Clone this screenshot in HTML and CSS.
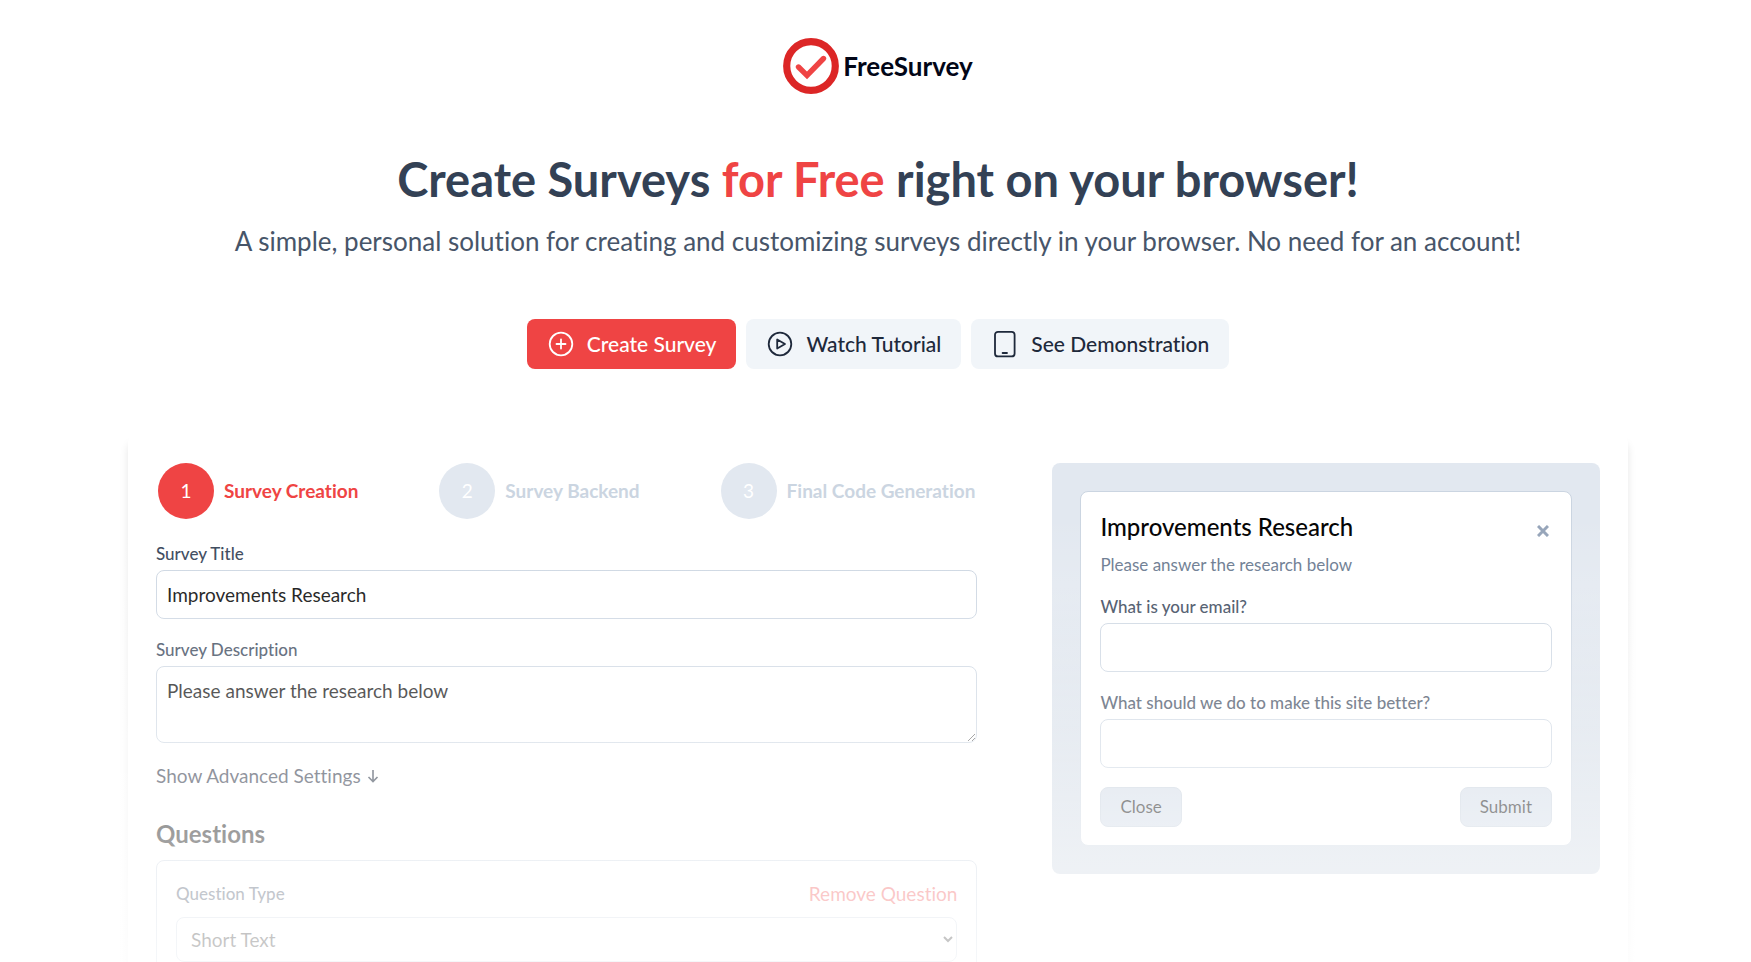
FILE: index.html
```html
<!DOCTYPE html>
<html lang="en">
  <head>
    <meta charset="utf-8">
    <meta name="viewport" content="width=device-width, initial-scale=1">
    <title>FreeSurvey</title>
    <link rel="stylesheet" href="styles.css">
  </head>
  <body>
    <div class="page">
      <header class="header">
        <a class="logo" href="#">
          <svg width="56" height="56" viewBox="0 0 56 56" fill="none">
            <circle cx="28" cy="28" r="24.3" stroke="#dc2626" stroke-width="7.2"/>
            <path d="M15.5 29L24 37.5L40.5 20.5" stroke="#ef4444" stroke-width="5.4" stroke-linecap="round"/>
          </svg>
          <span>FreeSurvey</span>
        </a>
      </header>

      <section class="hero">
        <h1>Create Surveys <span class="red">for Free</span> right on your browser!</h1>
        <p>A simple, personal solution for creating and customizing surveys directly in your browser. No need for an account!</p>
        <div class="actions">
          <a class="btn btn-primary" href="#create">
            <svg width="28" height="28" viewBox="0 0 28 28" fill="none" stroke="currentColor" stroke-width="1.8" stroke-linecap="round">
              <circle cx="14" cy="14" r="11.3"/>
              <path d="M14 9.5V18.5M9.5 14H18.5"/>
            </svg>
            Create Survey
          </a>
          <a class="btn" href="#tutorial">
            <svg width="28" height="28" viewBox="0 0 28 28" fill="none" stroke="currentColor" stroke-width="1.8" stroke-linejoin="round">
              <circle cx="14" cy="14" r="11.3"/>
              <path d="M11.2 9.5V18.5L19 14Z"/>
            </svg>
            Watch Tutorial
          </a>
          <a class="btn" href="#demo">
            <svg width="28" height="28" viewBox="0 0 28 28" fill="none" stroke="currentColor" stroke-width="1.8" stroke-linecap="round">
              <rect x="4" y="1.8" width="19.6" height="24.6" rx="3"/>
              <path d="M11.6 23H16"/>
            </svg>
            See Demonstration
          </a>
        </div>
      </section>

      <main class="card" id="create">
        <div class="builder">
          <ol class="steps">
            <li class="step active"><span class="num">1</span>Survey Creation</li>
            <li class="step"><span class="num">2</span>Survey Backend</li>
            <li class="step"><span class="num">3</span>Final Code Generation</li>
          </ol>

          <div class="field">
            <label for="title">Survey Title</label>
            <input id="title" type="text" value="Improvements Research">
          </div>
          <div class="field">
            <label for="description">Survey Description</label>
            <textarea id="description">Please answer the research below</textarea>
          </div>
          <button class="link-btn advanced" type="button">Show Advanced Settings
            <svg width="12" height="14" viewBox="0 0 12 14" fill="none" stroke="currentColor" stroke-width="1.6">
              <path d="M6 1V12.5M1.5 8L6 12.5L10.5 8"/>
            </svg>
          </button>

          <h2>Questions</h2>
          <div class="question">
            <div class="question-head">
              <label for="type">Question Type</label>
              <button class="link-btn remove" type="button">Remove Question</button>
            </div>
            <select id="type">
              <option>Short Text</option>
              <option>Long Text</option>
            </select>
          </div>
        </div>

        <aside class="preview">
          <form class="modal">
            <div class="modal-head">
              <h3>Improvements Research</h3>
              <button class="close" type="button" aria-label="Close survey">
                <svg width="12" height="12" viewBox="0 0 12 12" stroke="currentColor" stroke-width="3">
                  <path d="M1 1L11 11M11 1L1 11"/>
                </svg>
              </button>
            </div>
            <p>Please answer the research below</p>
            <div class="field">
              <label for="email">What is your email?</label>
              <input id="email" type="text">
            </div>
            <div class="field">
              <label for="better">What should we do to make this site better?</label>
              <input id="better" type="text">
            </div>
            <div class="modal-foot">
              <button type="button">Close</button>
              <button type="button">Submit</button>
            </div>
          </form>
        </aside>
      </main>
    </div>
  </body>
</html>
```

FILE: styles.css
```css
*{
  box-sizing: border-box;
}
body{
  margin: 0;
  font-family: Lato, sans-serif;
  font-size: 19px;
  line-height: 24px;
  font-variant-ligatures: none;
  color: #000000;
  background-color: #ffffff;
}
h1, h2, h3, p, ol{
  margin: 0;
  padding: 0;
}
button, input, textarea, select{
  font: inherit;
}
.page{
  height: 100vh;
  overflow: hidden;
  padding-left: 5px;
}
.header{
  display: flex;
  justify-content: center;
  padding-top: 38px;
}
.logo{
  display: flex;
  align-items: center;
  gap: 4px;
  font-size: 26px;
  font-weight: 700;
  color: #020617;
  text-decoration: none;
}
.hero{
  padding-top: 55px;
  text-align: center;
}
.hero h1{
  font-size: 47px;
  line-height: 60px;
  font-weight: 700;
  color: #334155;
}
.hero .red{
  color: #ef4444;
}
.hero p{
  margin-top: 16px;
  font-size: 26px;
  line-height: 32px;
  color: #475569;
}
.actions{
  display: flex;
  justify-content: center;
  gap: 10px;
  margin-top: 62px;
}
.btn{
  display: flex;
  align-items: center;
  gap: 12px;
  height: 50px;
  padding: 0 20px;
  border-radius: 8px;
  background-color: #f1f5f9;
  color: #1e293b;
  font-size: 21px;
  font-weight: 500;
  text-decoration: none;
}
.btn-primary{
  background-color: #ef4444;
  color: #ffffff;
}

/* survey builder */
.card{
  position: relative;
  display: grid;
  grid-template-columns: 3fr 2fr;
  gap: 75px;
  align-items: start;
  width: 1500px;
  max-width: 96%;
  min-height: 640px;
  margin: 66px auto 0;
  padding: 28px;
  border-radius: 8px;
  box-shadow: 0 8px 8px rgba(0, 0, 0, 0.1);
}
/* fades the lower part of the card into the page */
.card::after{
  content: '';
  position: absolute;
  top: 0;
  right: -12px;
  bottom: -12px;
  left: -12px;
  background: linear-gradient(to bottom, rgba(255, 255, 255, 0) 80px, rgba(255, 255, 255, 0.62) 400px, rgba(255, 255, 255, 0.8) 520px, #ffffff 660px);
  pointer-events: none;
}
.steps{
  display: flex;
  justify-content: space-between;
  padding: 0 2px;
  margin-bottom: 23px;
  list-style: none;
}
.step{
  display: flex;
  align-items: center;
  gap: 10px;
  font-weight: 700;
  color: #cbd5e1;
}
.step .num{
  display: flex;
  align-items: center;
  justify-content: center;
  width: 56px;
  height: 56px;
  border-radius: 50%;
  background-color: #e2e8f0;
  color: #ffffff;
  font-weight: 400;
}
.step.active{
  color: #ef4444;
}
.step.active .num{
  background-color: #ef4444;
}
.field{
  display: flex;
  flex-direction: column;
  gap: 4px;
  margin-bottom: 19px;
}
label{
  font-size: 17px;
  font-weight: 500;
  color: #334155;
}
input, textarea, select{
  width: 100%;
  border: 1px solid #cbd5e1;
  border-radius: 8px;
  background-color: #ffffff;
  color: #000000;
}
input{
  height: 49px;
  padding: 0 10px;
}
textarea{
  height: 77px;
  padding: 12px 10px;
  resize: vertical;
}
.link-btn{
  padding: 0;
  border: none;
  background: none;
  cursor: pointer;
}
.advanced{
  display: flex;
  align-items: center;
  gap: 6px;
  margin-top: 21px;
  color: #1e293b;
}
h2{
  margin: 30px 0 10px;
  font-size: 24px;
  line-height: 32px;
  font-weight: 700;
}
.question{
  padding: 21px 19px;
  border: 1px solid #cbd5e1;
  border-radius: 8px;
}
.question-head{
  display: flex;
  justify-content: space-between;
  align-items: center;
  margin-bottom: 11px;
}
.remove{
  color: #ef4444;
}
select{
  height: 45px;
  padding: 0 10px;
}

/* preview of the survey */
.preview{
  padding: 28px;
  border-radius: 8px;
  background: linear-gradient(to bottom, #e2e8f0 30%, #cbd5e1);
}
.modal{
  padding: 19px 19px 18px;
  border: 1px solid #cbd5e1;
  border-radius: 8px;
  background-color: #ffffff;
}
.modal-head{
  display: flex;
  justify-content: space-between;
  align-items: center;
}
h3{
  font-size: 24px;
  line-height: 32px;
  font-weight: 500;
}
.close{
  display: flex;
  padding: 8px 3px 0;
  border: none;
  background: none;
  color: #94a3b8;
}
.modal p{
  margin: 10px 0 18px;
  font-size: 17px;
  color: #64748b;
}
.modal-foot{
  display: flex;
  justify-content: space-between;
}
.modal-foot button{
  height: 40px;
  padding: 0 19px;
  border: 1px solid #c3cedb;
  border-radius: 8px;
  background-color: #cfd9e6;
  color: #000000;
  font-size: 17px;
}
```
